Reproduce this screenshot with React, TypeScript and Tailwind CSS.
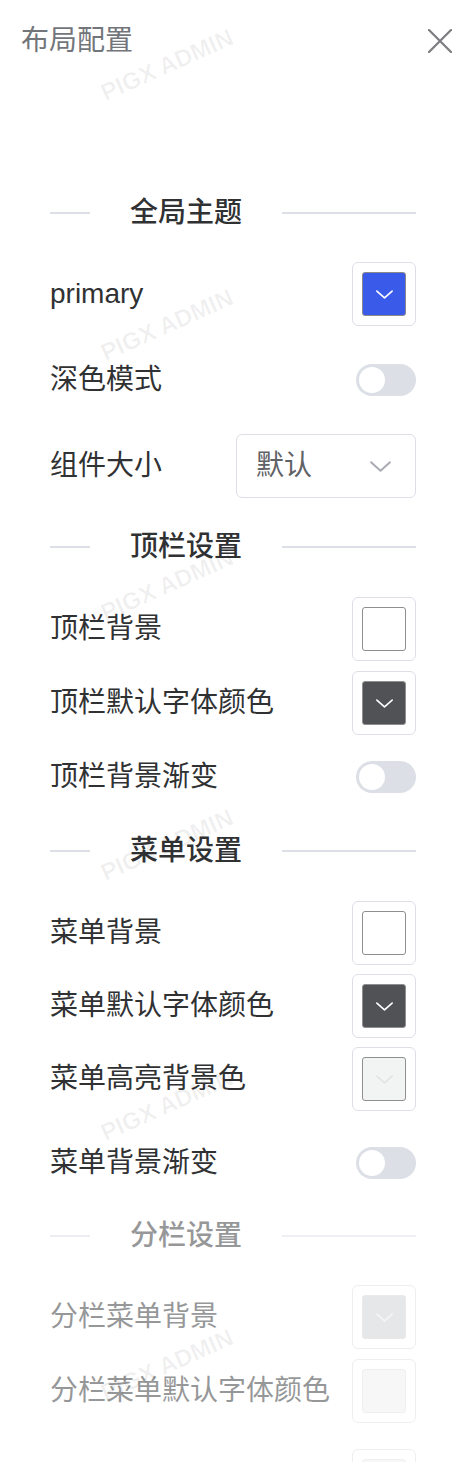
import React from "react";

function Chevron({ className }: { className?: string }) {
  return (
    <svg viewBox="0 0 16 8" className={className} fill="none">
      <polyline points="0.8,0.8 8,7.2 15.2,0.8" stroke="currentColor" strokeWidth="1.5" strokeLinecap="round" strokeLinejoin="round" />
    </svg>
  );
}

function Picker({ color, chevron = true, chevronClass = "text-white", innerBorder = "border-[#8f8f8f]" }: { color: string; chevron?: boolean; chevronClass?: string; innerBorder?: string }) {
  return (
    <div className="w-[64px] h-[64px] rounded-[6px] border-[1.5px] border-[#dcdfe6] flex items-center justify-center shrink-0">
      <div className={`w-[44px] h-[44px] rounded-[3px] border-[1.5px] ${innerBorder} flex items-center justify-center ${color}`}>
        {chevron && <Chevron className={`w-[17px] h-[9px] ${chevronClass}`} />}
      </div>
    </div>
  );
}

function Toggle() {
  return (
    <div className="w-[60px] h-[32px] rounded-full bg-[#dcdfe6] flex items-center px-[3px] shrink-0">
      <div className="w-[26px] h-[26px] rounded-full bg-white" />
    </div>
  );
}

function Divider({ title, className = "" }: { title: string; className?: string }) {
  return (
    <div className={`flex items-center h-[30px] ${className}`}>
      <div className="w-[40px] h-[1.5px] bg-[#dcdfe6]" />
      <div className="px-[40px] text-[28px] leading-[30px] font-medium text-[#303133]">{title}</div>
      <div className="flex-1 h-[1.5px] bg-[#dcdfe6]" />
    </div>
  );
}

function Row({ label, children, className = "" }: { label: string; children: React.ReactNode; className?: string }) {
  return (
    <div className={`flex items-center justify-between h-[64px] ${className}`}>
      <span className="text-[28px] leading-[34px] text-[#303133] whitespace-nowrap">{label}</span>
      {children}
    </div>
  );
}

export default function App() {
  return (
    <div className="relative w-[470px] h-[1462px] overflow-hidden bg-white font-['Liberation_Sans','Noto_Sans_CJK_SC',sans-serif]">
      <div className="flex items-center justify-between h-[81px] pl-[21px] pr-[18px]">
        <span className="text-[28px] leading-[34px] text-[#72767b]">布局配置</span>
        <svg viewBox="0 0 24 24" className="w-[24px] h-[24px] text-[#7a7c80]" fill="none">
          <path d="M1 1 L23 23 M23 1 L1 23" stroke="currentColor" strokeWidth="2.2" strokeLinecap="round" />
        </svg>
      </div>

      <div className="pl-[50px] pr-[54px] flex flex-col">
        <Divider title="全局主题" className="mt-[117px]" />
        <Row label="primary" className="mt-[34px]">
          <Picker color="bg-[#3a5be9]" innerBorder="border-[#8a8a8a]" />
        </Row>
        <Row label="深色模式" className="mt-[22px]">
          <Toggle />
        </Row>
        <Row label="组件大小" className="mt-[22px]">
          <div className="w-[180px] h-[64px] rounded-[6px] border-[1.5px] border-[#dcdfe6] flex items-center justify-between pl-[19px] pr-[24px]">
            <span className="text-[28px] leading-[34px] text-[#606266]">默认</span>
            <Chevron className="w-[21px] h-[11px] text-[#a8abb2]" />
          </div>
        </Row>

        <Divider title="顶栏设置" className="mt-[34px]" />
        <Row label="顶栏背景" className="mt-[35px]">
          <Picker color="bg-white" chevron={false} />
        </Row>
        <Row label="顶栏默认字体颜色" className="mt-[10px]">
          <Picker color="bg-[#505256]" />
        </Row>
        <Row label="顶栏背景渐变" className="mt-[10px]">
          <Toggle />
        </Row>

        <Divider title="菜单设置" className="mt-[27px]" />
        <Row label="菜单背景" className="mt-[35px]">
          <Picker color="bg-white" chevron={false} />
        </Row>
        <Row label="菜单默认字体颜色" className="mt-[9px]">
          <Picker color="bg-[#505256]" />
        </Row>
        <Row label="菜单高亮背景色" className="mt-[9px]">
          <Picker color="bg-[#f2f3f3]" chevronClass="text-[#e2e3e3]" />
        </Row>
        <Row label="菜单背景渐变" className="mt-[20px]">
          <Toggle />
        </Row>

        <div className="opacity-50 flex flex-col">
          <Divider title="分栏设置" className="mt-[26px]" />
          <Row label="分栏菜单背景" className="mt-[34px]">
            <Picker color="bg-[#cfd0d2]" chevronClass="text-[#eeeeee]" innerBorder="border-[#d6d6d6]" />
          </Row>
          <Row label="分栏菜单默认字体颜色" className="mt-[10px]">
            <Picker color="bg-[#f0f0f0]" chevron={false} innerBorder="border-[#e0e0e0]" />
          </Row>
          <div className="flex items-center justify-end h-[64px] mt-[26px]">
            <Picker color="bg-[#f0f0f0]" chevron={false} innerBorder="border-[#e0e0e0]" />
          </div>
        </div>
      </div>

      <div className="pointer-events-none absolute inset-0 font-['Liberation_Sans',sans-serif] font-bold text-[24px] text-[rgba(0,0,0,0.06)] whitespace-nowrap">
        <span className="absolute left-[167px] top-[65px] -translate-x-1/2 -translate-y-1/2 -rotate-[24deg]">PIGX ADMIN</span>
        <span className="absolute left-[167px] top-[325px] -translate-x-1/2 -translate-y-1/2 -rotate-[24deg]">PIGX ADMIN</span>
        <span className="absolute left-[167px] top-[585px] -translate-x-1/2 -translate-y-1/2 -rotate-[24deg]">PIGX ADMIN</span>
        <span className="absolute left-[167px] top-[845px] -translate-x-1/2 -translate-y-1/2 -rotate-[24deg]">PIGX ADMIN</span>
        <span className="absolute left-[167px] top-[1105px] -translate-x-1/2 -translate-y-1/2 -rotate-[24deg]">PIGX ADMIN</span>
        <span className="absolute left-[167px] top-[1365px] -translate-x-1/2 -translate-y-1/2 -rotate-[24deg]">PIGX ADMIN</span>
      </div>
    </div>
  );
}
